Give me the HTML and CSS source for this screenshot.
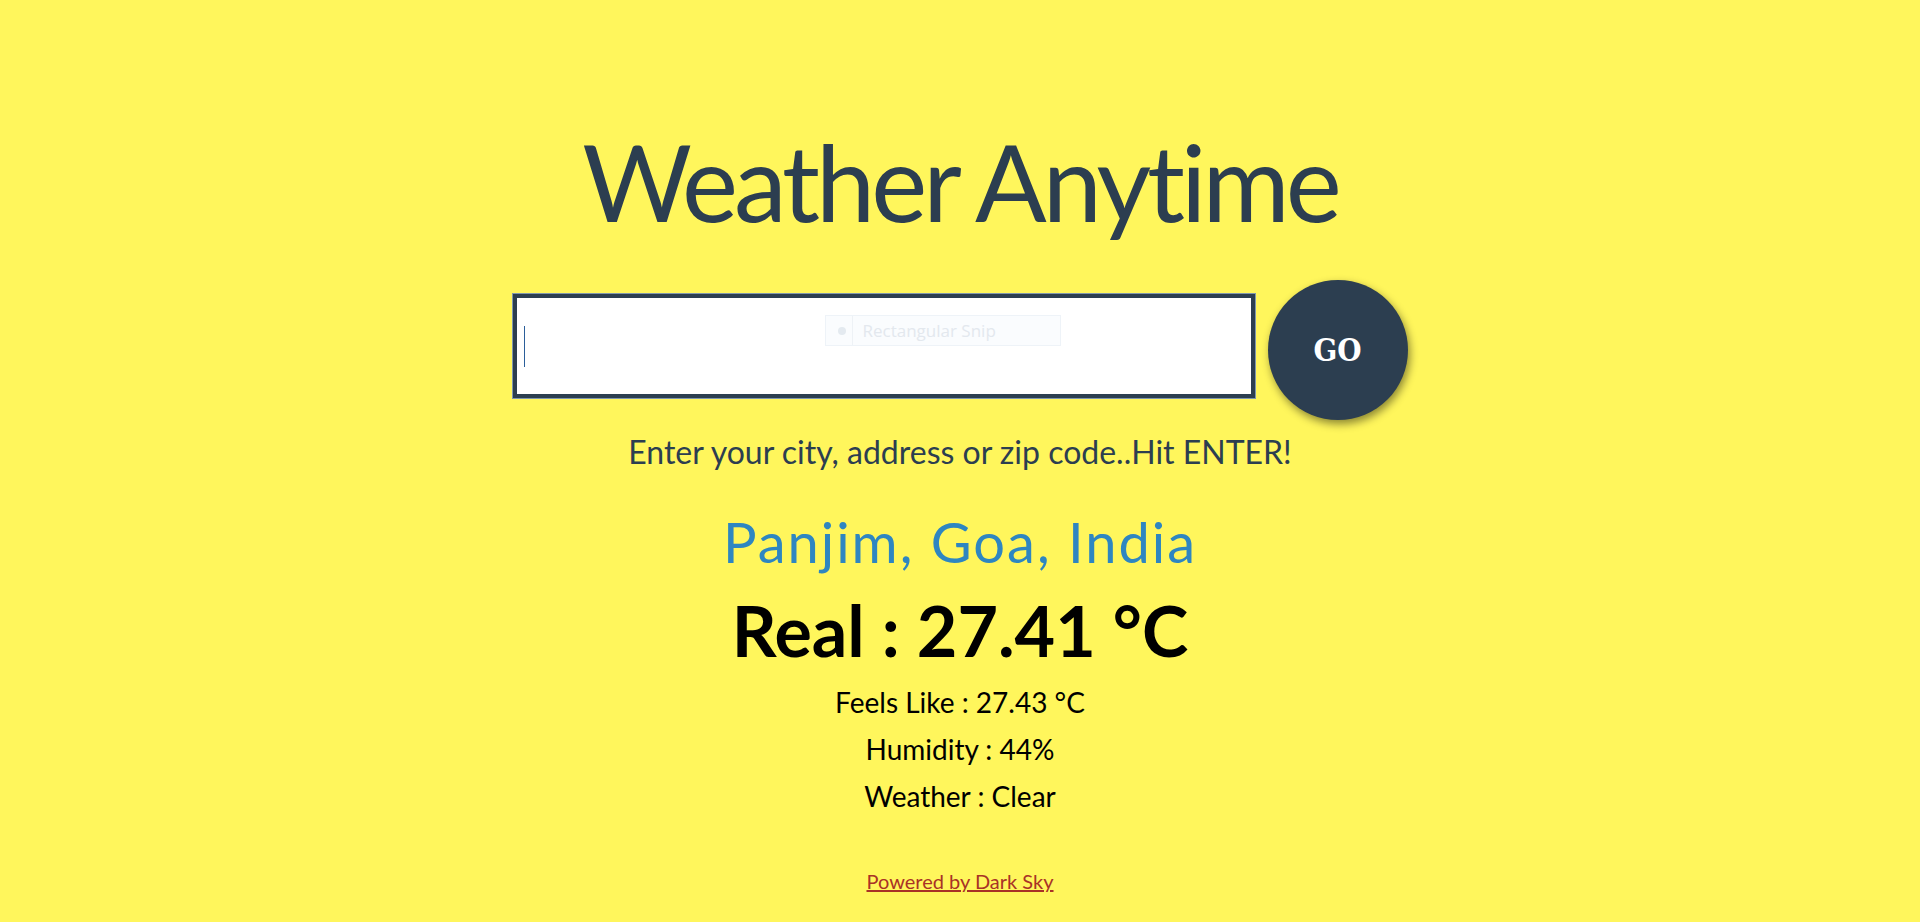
FILE: index.html
```html
<!DOCTYPE html>
<html lang="en">
<head>
<meta charset="utf-8">
<title>Weather Anytime</title>
<link rel="stylesheet" href="styles.css">
</head>
<body>
<main class="app">
  <h1 class="title">Weather Anytime</h1>
  <form class="search" onsubmit="return false">
    <div class="field">
      <input class="field-input" type="text" aria-label="Location">
      <span class="caret"></span>
      <div class="snip"><span class="snip-dot"></span><span class="snip-text">Rectangular Snip</span></div>
    </div>
    <button class="go" type="submit">GO</button>
  </form>
  <p class="hint">Enter your city, address or zip code..Hit ENTER!</p>
  <h2 class="place">Panjim, Goa, India</h2>
  <div class="real">Real : 27.41 °C</div>
  <div class="details">
    <div class="detail">Feels Like : 27.43 °C</div>
    <div class="detail">Humidity : 44%</div>
    <div class="detail">Weather : Clear</div>
  </div>
  <a class="credit" href="#">Powered by Dark Sky</a>
</main>
</body>
</html>
```

FILE: styles.css
```css
html, body {
  margin: 0;
  padding: 0;
}
body {
  background: #fff65c;
  font-family: Lato, "Noto Sans", sans-serif;
  font-variant-ligatures: none;
  color: #2c3e50;
  min-height: 922px;
}
.app {
  display: flex;
  flex-direction: column;
  align-items: center;
  padding-top: 118px;
}
.title {
  margin: 0;
  font-size: 106px;
  line-height: 1.2;
  letter-spacing: -4px;
  font-weight: 400;
  color: #2c3e50;
}
.search {
  display: flex;
  align-items: center;
  gap: 13px;
  margin-top: 35px;
  height: 140px;
}
.field {
  position: relative;
  width: 742px;
  height: 104px;
  margin-bottom: 8px;
}
.field-input {
  box-sizing: border-box;
  width: 100%;
  height: 100%;
  margin: 0;
  border: 4px solid #2c3e50;
  box-shadow: 0 0 0 1px #7f97ad;
  background: #ffffff;
  padding: 0 7px;
  font-size: 28px;
  outline: none;
}
.caret {
  position: absolute;
  left: 11px;
  top: 32px;
  width: 1px;
  height: 41px;
  background: #2b5f9a;
}
.snip {
  position: absolute;
  left: 312px;
  top: 21px;
  width: 236px;
  height: 31px;
  box-sizing: border-box;
  border: 1px solid #eef3f8;
  background: #fafcfe;
  display: flex;
  align-items: center;
}
.snip-dot {
  width: 8px;
  height: 8px;
  border-radius: 50%;
  background: #e4eaf0;
  margin-left: 12px;
  margin-right: 11px;
  position: relative;
}
.snip-dot::after {
  content: "";
  position: absolute;
  left: 14px;
  top: -11px;
  width: 1px;
  height: 29px;
  background: #eef2f6;
}
.snip-text {
  margin-left: 6px;
  font-family: "Open Sans", sans-serif;
  font-size: 17px;
  color: #e3e8ee;
}
.go {
  width: 140px;
  height: 140px;
  border-radius: 50%;
  border: none;
  background: #2c3e50;
  color: #ffffff;
  font-family: "DejaVu Serif Condensed", "DejaVu Serif", serif;
  font-stretch: condensed;
  font-weight: 700;
  font-size: 31px;
  box-shadow: 2px 4px 8px rgba(0, 0, 0, 0.45);
  padding: 0;
  cursor: pointer;
}
.hint {
  margin: 13px 0 0;
  font-size: 32px;
  line-height: 1.2;
  color: #2c3e50;
}
.place {
  margin: 36px 0 0;
  font-size: 56px;
  line-height: 1.2;
  letter-spacing: 2px;
  font-weight: 400;
  color: #2e86c1;
}
.real {
  margin-top: 13px;
  font-size: 70px;
  line-height: 1.2;
  font-weight: 700;
  color: #000000;
}
.details {
  margin-top: 7px;
  display: flex;
  flex-direction: column;
  align-items: center;
}
.detail {
  font-size: 28px;
  line-height: 47px;
  color: #000000;
}
.credit {
  margin-top: 49px;
  font-size: 20px;
  line-height: 1.2;
  color: #a93226;
  text-decoration: underline;
}
```
